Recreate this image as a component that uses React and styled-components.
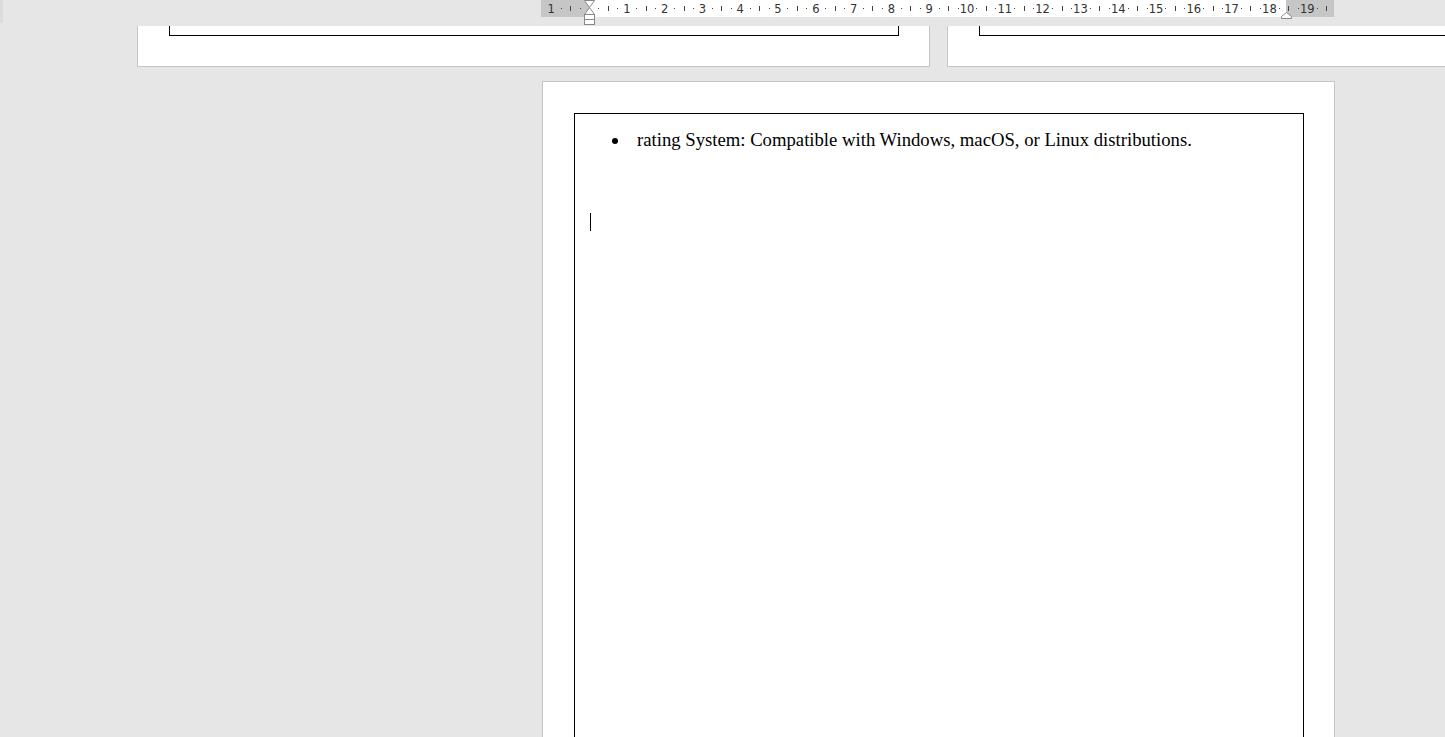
import React from 'react'
import styled, { createGlobalStyle } from 'styled-components'

const GlobalStyle = createGlobalStyle`
  html, body {
    margin: 0;
    padding: 0;
    background: #e6e6e6;
    overflow: hidden;
  }
`

const Screen = styled.div`
  display: flex;
  flex-direction: column;
  width: 1445px;
  height: 737px;
  overflow: hidden;
  background: #e6e6e6;
`

const TopBar = styled.div`
  display: flex;
  align-items: flex-start;
  height: 26px;
  flex-shrink: 0;
`

const SideStub = styled.div`
  width: 3px;
  height: 23px;
  background: #dcdcdc;
`

const RulerWrap = styled.div`
  margin-left: 538px;
  height: 26px;
`

const Viewport = styled.div`
  display: flex;
  flex-direction: column;
  gap: 14px;
  overflow: hidden;
`

const PageRow = styled.div`
  display: flex;
  gap: 17px;
  padding-left: ${(p) => p.$left}px;
`

const Page = styled.div`
  box-sizing: border-box;
  flex-shrink: 0;
  width: 793px;
  height: ${(p) => p.$height}px;
  background: #fff;
  border: 1px solid #c6c6c6;
  border-top: ${(p) => (p.$cut ? 'none' : '1px solid #c6c6c6')};
  padding: ${(p) => (p.$cut ? '0 30px 0 31px' : '31px 30px 0 31px')};
`

const Frame = styled.div`
  box-sizing: border-box;
  height: ${(p) => p.$height}px;
  border: 1px solid #000;
  border-top: ${(p) => (p.$cut ? 'none' : '1px solid #000')};
  padding: ${(p) => (p.$cut ? '0' : '15px 0 0 15px')};
`

const List = styled.ul`
  list-style: none;
  margin: 0;
  padding: 0 0 0 22px;
`

const Item = styled.li`
  display: flex;
  align-items: center;
  font-family: 'Liberation Serif', 'Times New Roman', serif;
  font-size: 18.7px;
  color: #000;
  white-space: nowrap;
`

const Bullet = styled.span`
  width: 6px;
  height: 6px;
  border-radius: 50%;
  background: #000;
  margin-right: 19px;
  margin-top: 1px;
  flex-shrink: 0;
`

const Caret = styled.div`
  width: 1px;
  height: 18px;
  background: #000;
  margin-top: 62px;
`

const CM = 37.8
const ORIGIN = 48
const RIGHT = 745

function Ruler() {
  const marks = []
  for (let n = -2; n <= 20; n++) {
    const x = ORIGIN + n * CM
    if (n !== 0 && x > 0 && x < 793) {
      marks.push(
        <text key={'t' + n} x={x} y={13} textAnchor="middle" fontSize="11.5" fill="#333"
          fontFamily="'DejaVu Sans', 'Liberation Sans', Arial, sans-serif">{n < 0 ? -n : n}</text>
      )
    }
    ;[0.25, 0.75].forEach((f) => {
      const dx = x + f * CM
      if (dx > 1 && dx < 792) marks.push(<rect key={'d' + n + f} x={Math.round(dx)} y={8} width={1} height={1} fill="#444" />)
    })
    const hx = x + 0.5 * CM
    if (hx > 1 && hx < 792) marks.push(<rect key={'h' + n} x={Math.round(hx)} y={6} width={1} height={5} fill="#444" />)
  }
  return (
    <svg width="793" height="26" viewBox="0 0 793 26">
      <rect x="0" y="0" width="793" height="17" fill="#fff" />
      <rect x="0" y="0" width={ORIGIN} height="17" fill="#c6c6c6" />
      <rect x={RIGHT} y="0" width={793 - RIGHT} height="17" fill="#c6c6c6" />
      {marks}
      <path d="M43.5 0.5 L53.5 0.5 L48.5 7.5 L53.5 14.5 L43.5 14.5 L48.5 7.5 Z" fill="#fff" stroke="#888" strokeWidth="1" />
      <rect x="43.5" y="14.5" width="10" height="10" fill="#fff" stroke="#888" strokeWidth="1" />
      <line x1="43.5" y1="19.5" x2="53.5" y2="19.5" stroke="#888" strokeWidth="1" />
      <path d="M745.5 12.5 L750.5 16.5 L750.5 18.5 L740.5 18.5 L740.5 16.5 Z" fill="#fff" stroke="#888" strokeWidth="1" />
    </svg>
  )
}

export default function App() {
  return (
    <>
      <GlobalStyle />
      <Screen>
        <TopBar>
          <SideStub />
          <RulerWrap>
            <Ruler />
          </RulerWrap>
        </TopBar>
        <Viewport>
          <PageRow $left={137}>
            <Page $cut $height={41}>
              <Frame $cut $height={10} />
            </Page>
            <Page $cut $height={41}>
              <Frame $cut $height={10} />
            </Page>
          </PageRow>
          <PageRow $left={542}>
            <Page $height={1122}>
              <Frame $height={1060}>
                <List>
                  <Item>
                    <Bullet />
                    rating System: Compatible with Windows, macOS, or Linux distributions.
                  </Item>
                </List>
                <Caret />
              </Frame>
            </Page>
          </PageRow>
        </Viewport>
      </Screen>
    </>
  )
}
